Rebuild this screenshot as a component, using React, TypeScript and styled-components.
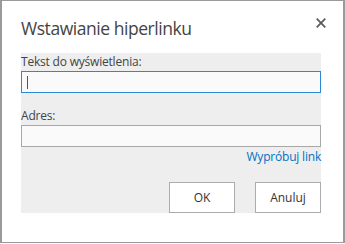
import React from 'react'
import styled, { createGlobalStyle } from 'styled-components'

const Global = createGlobalStyle`
  html, body {
    margin: 0;
    padding: 0;
    background: #fff;
  }
  * { box-sizing: border-box; }
`

const Dialog = styled.div`
  width: 345px;
  height: 243px;
  border: 1px solid #9a9a9a;
  border-left-width: 2px;
  border-right-width: 2px;
  background: #fff;
  font-family: "Open Sans", "Noto Sans", sans-serif;
  padding: 0 22px 0 19px;
`

const Header = styled.div`
  display: flex;
  justify-content: space-between;
  align-items: flex-start;
  height: 52px;
  padding-top: 15px;
`

const Title = styled.h1`
  margin: 0;
  font-size: 17.5px;
  font-weight: 400;
  color: #444;
  letter-spacing: -0.45px;
  line-height: 24px;
`

const Close = styled.button`
  border: 0;
  background: none;
  padding: 0;
  margin: 1px -6px 0 0;
  width: 12px;
  height: 12px;
  display: flex;
  align-items: center;
  justify-content: center;
`

const Panel = styled.div`
  background: #eeeeee;
  height: 160px;
  display: flex;
  flex-direction: column;
  padding-top: 1px;
`

const Label = styled.label`
  font-size: 12px;
  color: #444;
  line-height: 16px;
  letter-spacing: -0.2px;
  margin-bottom: 1px;
`

const Field = styled.div<{ $focused?: boolean }>`
  height: 22px;
  flex-shrink: 0;
  background: #fafafa;
  border: 1px solid ${p => (p.$focused ? '#2b88d8' : '#a8a8a8')};
  display: flex;
  align-items: center;
  padding-left: 5px;
`

const Caret = styled.span`
  width: 1px;
  height: 13px;
  background: #555;
`

const Spacer = styled.div<{ $h: number }>`
  height: ${p => p.$h}px;
  flex-shrink: 0;
`

const Link = styled.a`
  align-self: flex-end;
  font-size: 12px;
  letter-spacing: -0.2px;
  color: #0072c6;
  line-height: 16px;
  margin-top: 2px;
  text-decoration: none;
`

const Buttons = styled.div`
  margin-top: auto;
  display: flex;
  justify-content: flex-end;
  gap: 20px;
`

const Btn = styled.button`
  width: 66px;
  height: 31px;
  background: #fff;
  border: 1px solid #acacac;
  font-family: inherit;
  font-size: 12px;
  color: #333;
  padding: 0;
`

export default function App() {
  return (
    <>
      <Global />
      <Dialog>
        <Header>
          <Title>Wstawianie hiperlinku</Title>
          <Close aria-label="Zamknij">
            <svg width="10" height="10" viewBox="0 0 10 10">
              <path d="M0.7 0.7 L9.3 9.3 M9.3 0.7 L0.7 9.3" stroke="#5a5a5a" strokeWidth="1.7" />
            </svg>
          </Close>
        </Header>
        <Panel>
          <Label>Tekst do wyświetlenia:</Label>
          <Field $focused>
            <Caret />
          </Field>
          <Spacer $h={15} />
          <Label>Adres:</Label>
          <Field />
          <Link href="#">Wypróbuj link</Link>
          <Buttons>
            <Btn>OK</Btn>
            <Btn>Anuluj</Btn>
          </Buttons>
        </Panel>
      </Dialog>
    </>
  )
}
